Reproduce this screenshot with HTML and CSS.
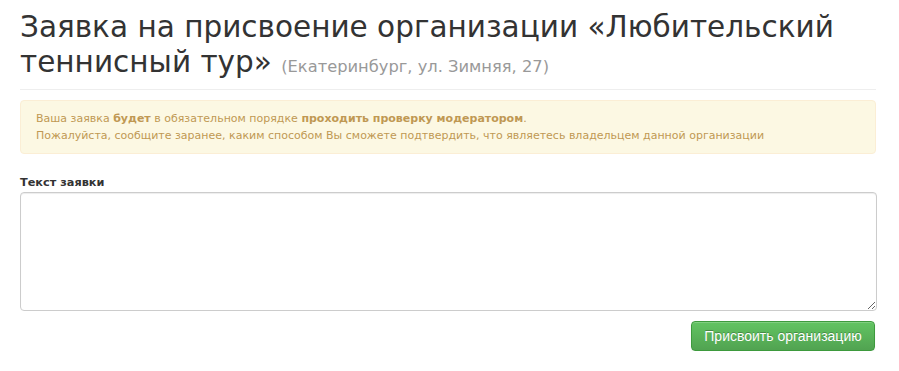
FILE: index.html
```html
<!DOCTYPE html>
<html lang="ru">
<head>
    <meta charset="UTF-8">
    <title>Заявка на присвоение организации</title>
    <link rel="stylesheet" href="styles.css">
</head>
<body>
    <div class="container">
        <h1 class="page-title">Заявка на присвоение организации «Любительский теннисный тур» <small>(Екатеринбург, ул. Зимняя, 27)</small></h1>
        <div class="alert">
            Ваша заявка <b>будет</b> в обязательном порядке <b>проходить проверку модератором</b>.<br>
            Пожалуйста, сообщите заранее, каким способом Вы сможете подтвердить, что являетесь владельцем данной организации
        </div>
        <form class="claim-form">
            <label for="claim-text">Текст заявки</label>
            <textarea id="claim-text"></textarea>
            <div class="actions">
                <button type="submit" class="btn-success">Присвоить организацию</button>
            </div>
        </form>
    </div>
</body>
</html>
```

FILE: styles.css
```css
body { margin: 0; font-family: "DejaVu Sans", sans-serif; color: #333; background: #fff; }
.container { width: 856px; padding: 0 20px; }
.page-title { font-size: 29.5px; font-weight: normal; line-height: 35px; margin: 10px 0 0; padding-bottom: 9px; border-bottom: 1px solid #eee; color: #333; }
.page-title small { font-size: 16.3px; line-height: 1; color: #999; }
.alert { margin-top: 10px; padding: 9px 15px 9px; background: #fcf8e3; border: 1px solid #fbeed5; border-radius: 4px; color: #c09853; font-size: 11px; line-height: 17px; }
.alert b { font-weight: bold; }
.claim-form { margin-top: 22px; }
.claim-form label { display: block; font-weight: bold; font-size: 11.3px; line-height: 14px; margin-bottom: 2px; color: #333; }
.claim-form textarea { display: block; box-sizing: border-box; width: 857px; height: 119px; margin: 0; border: 1px solid #ccc; border-radius: 4px; box-shadow: inset 0 1px 1px rgba(0, 0, 0, 0.075); resize: vertical; }
.actions { display: flex; justify-content: flex-end; margin-top: 10px; padding-right: 1px; }
.btn-success { font-family: "Liberation Sans", Arial, sans-serif; font-size: 14px; color: #fff; text-shadow: 0 -1px 0 rgba(0, 0, 0, 0.25); width: 184px; height: 30px; border: 1px solid #3d9a3d; border-radius: 4px; background: linear-gradient(#62c462, #51a351); box-shadow: inset 0 1px 0 rgba(255, 255, 255, 0.2), 0 1px 2px rgba(0, 0, 0, 0.05); cursor: pointer; }
```
